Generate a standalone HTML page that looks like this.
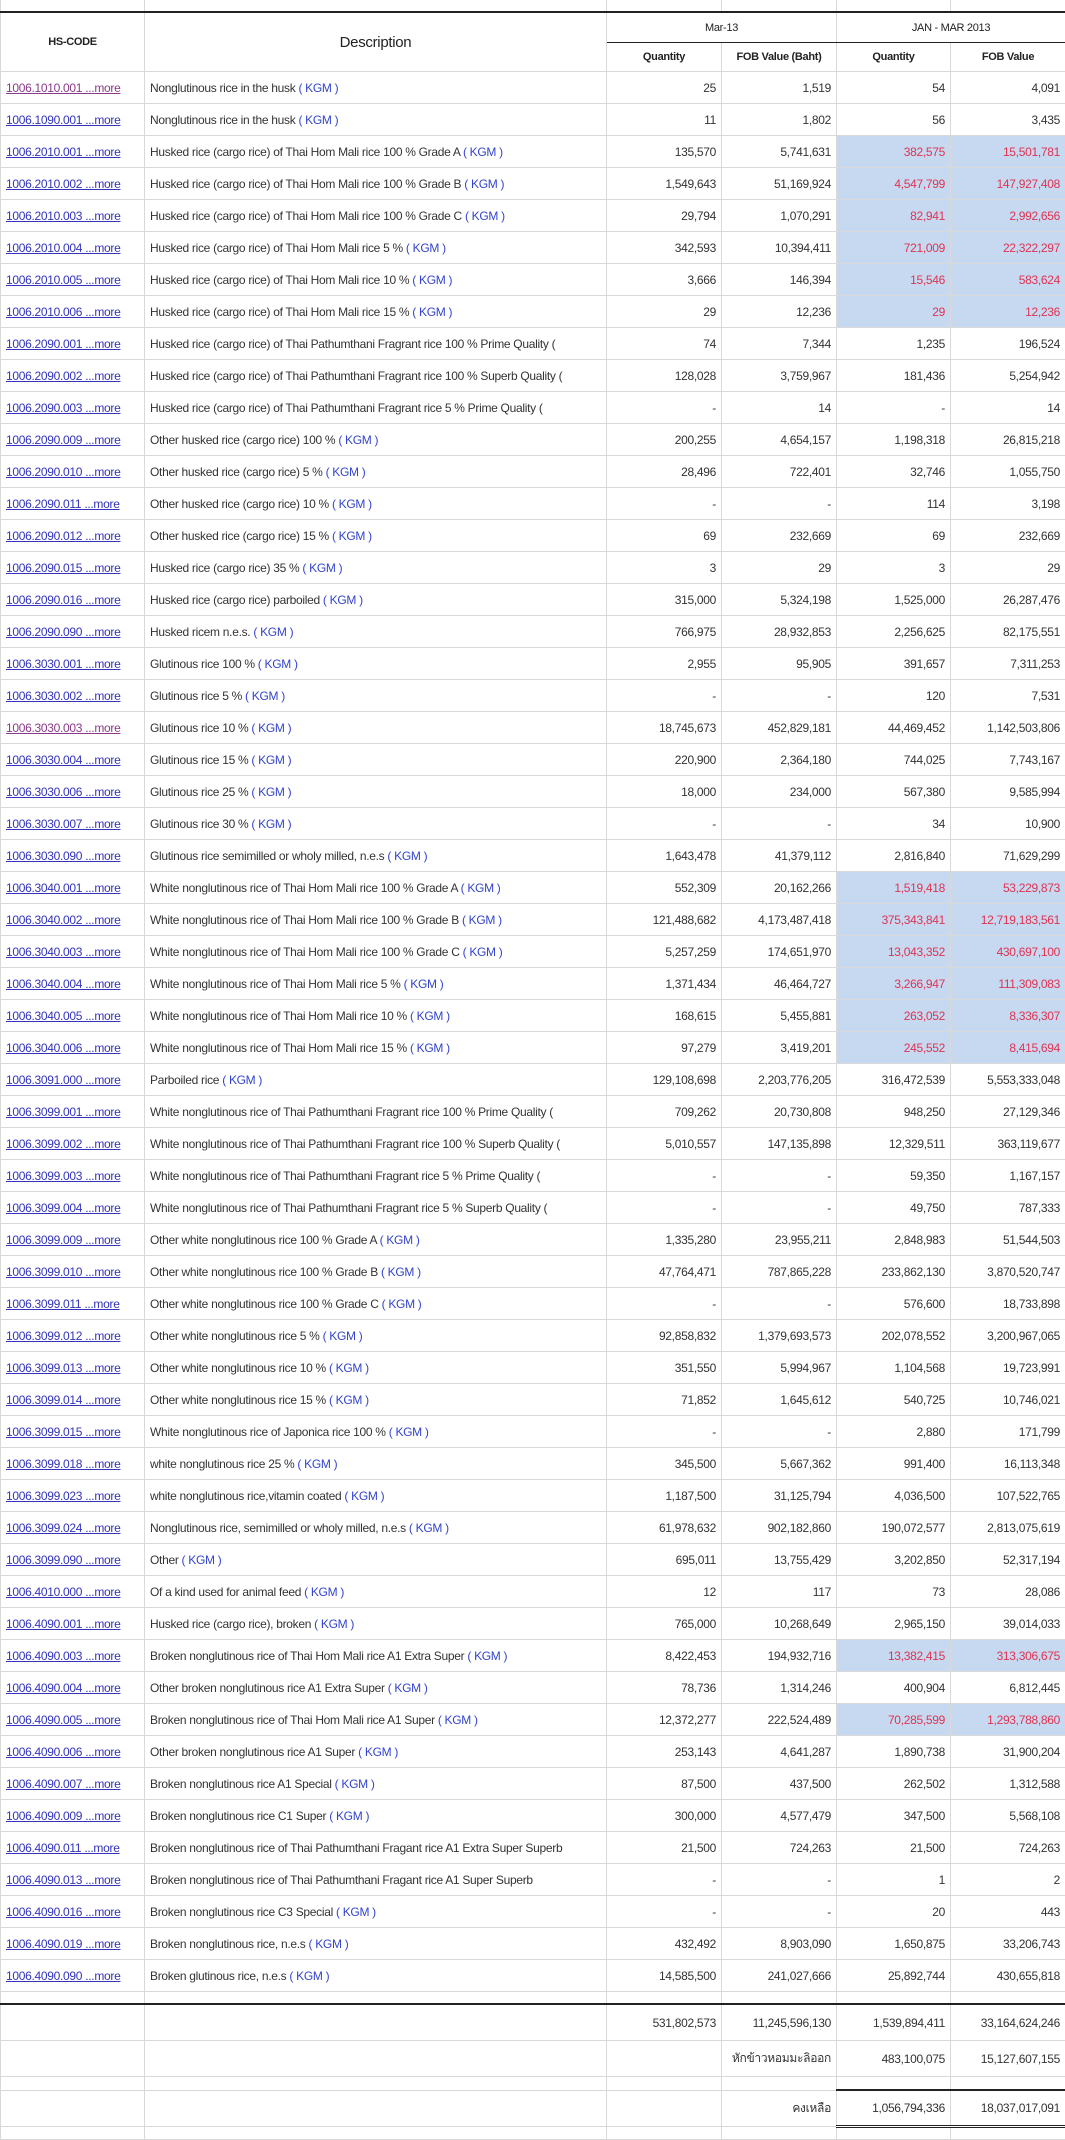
<!DOCTYPE html>
<html><head><meta charset="utf-8"><style>
body{margin:0;background:#fff;width:1065px;height:2130px;overflow:hidden;font-family:"Liberation Sans",Arial,sans-serif;font-size:12px;color:#333;letter-spacing:-0.3px}
table{border-collapse:collapse;table-layout:fixed;width:1065px}
td{border:1px solid #d9d9d9;padding:0 5px;white-space:nowrap;overflow:hidden;height:31px}
td.n{text-align:right}
td.h{background:#c6d9f0;color:#e03352;text-align:right}
a{color:#3333bb;text-decoration:underline}
a.v{color:#8a3a8a}
b{font-weight:normal;color:#3344cc}
tr.top td{height:11px;border-top:0}
tr.hd td{font-weight:bold;text-align:center;font-size:11px;color:#222}
tr.hd1 td{border-top:2px solid #222;height:29px}
tr.hd2 td{height:28px}
.desc{font-size:15px!important;font-weight:normal!important}
tr.sp td{height:11px}
tr.tk td{border-top:2px solid #222}
tr.ft td{height:35px}
tr.sp2 td{height:12px}
tr.last td{height:34px}
td.tk2{border-top:2px solid #222!important;border-bottom:3px double #222!important}
</style></head><body>
<table>
<colgroup><col style="width:144px"><col style="width:462px"><col style="width:115px"><col style="width:115px"><col style="width:114px"><col style="width:115px"></colgroup>
<tr class="top"><td></td><td></td><td></td><td></td><td></td><td></td></tr>
<tr class="hd hd1"><td rowspan="2">HS-CODE</td><td rowspan="2" class="desc">Description</td><td colspan="2" style="font-weight:normal;border-bottom:1px solid #222">Mar-13</td><td colspan="2" style="font-weight:normal;border-bottom:1px solid #222">JAN - MAR 2013</td></tr>
<tr class="hd hd2"><td>Quantity</td><td>FOB Value (Baht)</td><td>Quantity</td><td>FOB Value</td></tr>
<tr><td><a class="v">1006.1010.001 ...more</a></td><td>Nonglutinous rice in the husk <b>( KGM )</b></td><td class="n">25</td><td class="n">1,519</td><td class="n">54</td><td class="n">4,091</td></tr>
<tr><td><a>1006.1090.001 ...more</a></td><td>Nonglutinous rice in the husk <b>( KGM )</b></td><td class="n">11</td><td class="n">1,802</td><td class="n">56</td><td class="n">3,435</td></tr>
<tr><td><a>1006.2010.001 ...more</a></td><td>Husked rice (cargo rice) of Thai Hom Mali rice 100 % Grade A <b>( KGM )</b></td><td class="n">135,570</td><td class="n">5,741,631</td><td class="h">382,575</td><td class="h">15,501,781</td></tr>
<tr><td><a>1006.2010.002 ...more</a></td><td>Husked rice (cargo rice) of Thai Hom Mali rice 100 % Grade B <b>( KGM )</b></td><td class="n">1,549,643</td><td class="n">51,169,924</td><td class="h">4,547,799</td><td class="h">147,927,408</td></tr>
<tr><td><a>1006.2010.003 ...more</a></td><td>Husked rice (cargo rice) of Thai Hom Mali rice 100 % Grade C <b>( KGM )</b></td><td class="n">29,794</td><td class="n">1,070,291</td><td class="h">82,941</td><td class="h">2,992,656</td></tr>
<tr><td><a>1006.2010.004 ...more</a></td><td>Husked rice (cargo rice) of Thai Hom Mali rice 5 % <b>( KGM )</b></td><td class="n">342,593</td><td class="n">10,394,411</td><td class="h">721,009</td><td class="h">22,322,297</td></tr>
<tr><td><a>1006.2010.005 ...more</a></td><td>Husked rice (cargo rice) of Thai Hom Mali rice 10 % <b>( KGM )</b></td><td class="n">3,666</td><td class="n">146,394</td><td class="h">15,546</td><td class="h">583,624</td></tr>
<tr><td><a>1006.2010.006 ...more</a></td><td>Husked rice (cargo rice) of Thai Hom Mali rice 15 % <b>( KGM )</b></td><td class="n">29</td><td class="n">12,236</td><td class="h">29</td><td class="h">12,236</td></tr>
<tr><td><a>1006.2090.001 ...more</a></td><td>Husked rice (cargo rice) of Thai Pathumthani Fragrant rice 100 % Prime Quality (</td><td class="n">74</td><td class="n">7,344</td><td class="n">1,235</td><td class="n">196,524</td></tr>
<tr><td><a>1006.2090.002 ...more</a></td><td>Husked rice (cargo rice) of Thai Pathumthani Fragrant rice 100 % Superb Quality (</td><td class="n">128,028</td><td class="n">3,759,967</td><td class="n">181,436</td><td class="n">5,254,942</td></tr>
<tr><td><a>1006.2090.003 ...more</a></td><td>Husked rice (cargo rice) of Thai Pathumthani Fragrant rice 5 % Prime Quality (</td><td class="n">-</td><td class="n">14</td><td class="n">-</td><td class="n">14</td></tr>
<tr><td><a>1006.2090.009 ...more</a></td><td>Other husked rice (cargo rice) 100 % <b>( KGM )</b></td><td class="n">200,255</td><td class="n">4,654,157</td><td class="n">1,198,318</td><td class="n">26,815,218</td></tr>
<tr><td><a>1006.2090.010 ...more</a></td><td>Other husked rice (cargo rice) 5 % <b>( KGM )</b></td><td class="n">28,496</td><td class="n">722,401</td><td class="n">32,746</td><td class="n">1,055,750</td></tr>
<tr><td><a>1006.2090.011 ...more</a></td><td>Other husked rice (cargo rice) 10 % <b>( KGM )</b></td><td class="n">-</td><td class="n">-</td><td class="n">114</td><td class="n">3,198</td></tr>
<tr><td><a>1006.2090.012 ...more</a></td><td>Other husked rice (cargo rice) 15 % <b>( KGM )</b></td><td class="n">69</td><td class="n">232,669</td><td class="n">69</td><td class="n">232,669</td></tr>
<tr><td><a>1006.2090.015 ...more</a></td><td>Husked rice (cargo rice) 35 % <b>( KGM )</b></td><td class="n">3</td><td class="n">29</td><td class="n">3</td><td class="n">29</td></tr>
<tr><td><a>1006.2090.016 ...more</a></td><td>Husked rice (cargo rice) parboiled <b>( KGM )</b></td><td class="n">315,000</td><td class="n">5,324,198</td><td class="n">1,525,000</td><td class="n">26,287,476</td></tr>
<tr><td><a>1006.2090.090 ...more</a></td><td>Husked ricem n.e.s. <b>( KGM )</b></td><td class="n">766,975</td><td class="n">28,932,853</td><td class="n">2,256,625</td><td class="n">82,175,551</td></tr>
<tr><td><a>1006.3030.001 ...more</a></td><td>Glutinous rice 100 % <b>( KGM )</b></td><td class="n">2,955</td><td class="n">95,905</td><td class="n">391,657</td><td class="n">7,311,253</td></tr>
<tr><td><a>1006.3030.002 ...more</a></td><td>Glutinous rice 5 % <b>( KGM )</b></td><td class="n">-</td><td class="n">-</td><td class="n">120</td><td class="n">7,531</td></tr>
<tr><td><a class="v">1006.3030.003 ...more</a></td><td>Glutinous rice 10 % <b>( KGM )</b></td><td class="n">18,745,673</td><td class="n">452,829,181</td><td class="n">44,469,452</td><td class="n">1,142,503,806</td></tr>
<tr><td><a>1006.3030.004 ...more</a></td><td>Glutinous rice 15 % <b>( KGM )</b></td><td class="n">220,900</td><td class="n">2,364,180</td><td class="n">744,025</td><td class="n">7,743,167</td></tr>
<tr><td><a>1006.3030.006 ...more</a></td><td>Glutinous rice 25 % <b>( KGM )</b></td><td class="n">18,000</td><td class="n">234,000</td><td class="n">567,380</td><td class="n">9,585,994</td></tr>
<tr><td><a>1006.3030.007 ...more</a></td><td>Glutinous rice 30 % <b>( KGM )</b></td><td class="n">-</td><td class="n">-</td><td class="n">34</td><td class="n">10,900</td></tr>
<tr><td><a>1006.3030.090 ...more</a></td><td>Glutinous rice semimilled or wholy milled, n.e.s <b>( KGM )</b></td><td class="n">1,643,478</td><td class="n">41,379,112</td><td class="n">2,816,840</td><td class="n">71,629,299</td></tr>
<tr><td><a>1006.3040.001 ...more</a></td><td>White nonglutinous rice of Thai Hom Mali rice 100 % Grade A <b>( KGM )</b></td><td class="n">552,309</td><td class="n">20,162,266</td><td class="h">1,519,418</td><td class="h">53,229,873</td></tr>
<tr><td><a>1006.3040.002 ...more</a></td><td>White nonglutinous rice of Thai Hom Mali rice 100 % Grade B <b>( KGM )</b></td><td class="n">121,488,682</td><td class="n">4,173,487,418</td><td class="h">375,343,841</td><td class="h">12,719,183,561</td></tr>
<tr><td><a>1006.3040.003 ...more</a></td><td>White nonglutinous rice of Thai Hom Mali rice 100 % Grade C <b>( KGM )</b></td><td class="n">5,257,259</td><td class="n">174,651,970</td><td class="h">13,043,352</td><td class="h">430,697,100</td></tr>
<tr><td><a>1006.3040.004 ...more</a></td><td>White nonglutinous rice of Thai Hom Mali rice 5 % <b>( KGM )</b></td><td class="n">1,371,434</td><td class="n">46,464,727</td><td class="h">3,266,947</td><td class="h">111,309,083</td></tr>
<tr><td><a>1006.3040.005 ...more</a></td><td>White nonglutinous rice of Thai Hom Mali rice 10 % <b>( KGM )</b></td><td class="n">168,615</td><td class="n">5,455,881</td><td class="h">263,052</td><td class="h">8,336,307</td></tr>
<tr><td><a>1006.3040.006 ...more</a></td><td>White nonglutinous rice of Thai Hom Mali rice 15 % <b>( KGM )</b></td><td class="n">97,279</td><td class="n">3,419,201</td><td class="h">245,552</td><td class="h">8,415,694</td></tr>
<tr><td><a>1006.3091.000 ...more</a></td><td>Parboiled rice <b>( KGM )</b></td><td class="n">129,108,698</td><td class="n">2,203,776,205</td><td class="n">316,472,539</td><td class="n">5,553,333,048</td></tr>
<tr><td><a>1006.3099.001 ...more</a></td><td>White nonglutinous rice of Thai Pathumthani Fragrant rice 100 % Prime Quality (</td><td class="n">709,262</td><td class="n">20,730,808</td><td class="n">948,250</td><td class="n">27,129,346</td></tr>
<tr><td><a>1006.3099.002 ...more</a></td><td>White nonglutinous rice of Thai Pathumthani Fragrant rice 100 % Superb Quality (</td><td class="n">5,010,557</td><td class="n">147,135,898</td><td class="n">12,329,511</td><td class="n">363,119,677</td></tr>
<tr><td><a>1006.3099.003 ...more</a></td><td>White nonglutinous rice of Thai Pathumthani Fragrant rice 5 % Prime Quality (</td><td class="n">-</td><td class="n">-</td><td class="n">59,350</td><td class="n">1,167,157</td></tr>
<tr><td><a>1006.3099.004 ...more</a></td><td>White nonglutinous rice of Thai Pathumthani Fragrant rice 5 % Superb Quality (</td><td class="n">-</td><td class="n">-</td><td class="n">49,750</td><td class="n">787,333</td></tr>
<tr><td><a>1006.3099.009 ...more</a></td><td>Other white nonglutinous rice 100 % Grade A <b>( KGM )</b></td><td class="n">1,335,280</td><td class="n">23,955,211</td><td class="n">2,848,983</td><td class="n">51,544,503</td></tr>
<tr><td><a>1006.3099.010 ...more</a></td><td>Other white nonglutinous rice 100 % Grade B <b>( KGM )</b></td><td class="n">47,764,471</td><td class="n">787,865,228</td><td class="n">233,862,130</td><td class="n">3,870,520,747</td></tr>
<tr><td><a>1006.3099.011 ...more</a></td><td>Other white nonglutinous rice 100 % Grade C <b>( KGM )</b></td><td class="n">-</td><td class="n">-</td><td class="n">576,600</td><td class="n">18,733,898</td></tr>
<tr><td><a>1006.3099.012 ...more</a></td><td>Other white nonglutinous rice 5 % <b>( KGM )</b></td><td class="n">92,858,832</td><td class="n">1,379,693,573</td><td class="n">202,078,552</td><td class="n">3,200,967,065</td></tr>
<tr><td><a>1006.3099.013 ...more</a></td><td>Other white nonglutinous rice 10 % <b>( KGM )</b></td><td class="n">351,550</td><td class="n">5,994,967</td><td class="n">1,104,568</td><td class="n">19,723,991</td></tr>
<tr><td><a>1006.3099.014 ...more</a></td><td>Other white nonglutinous rice 15 % <b>( KGM )</b></td><td class="n">71,852</td><td class="n">1,645,612</td><td class="n">540,725</td><td class="n">10,746,021</td></tr>
<tr><td><a>1006.3099.015 ...more</a></td><td>White nonglutinous rice of Japonica rice 100 % <b>( KGM )</b></td><td class="n">-</td><td class="n">-</td><td class="n">2,880</td><td class="n">171,799</td></tr>
<tr><td><a>1006.3099.018 ...more</a></td><td>white nonglutinous rice 25 % <b>( KGM )</b></td><td class="n">345,500</td><td class="n">5,667,362</td><td class="n">991,400</td><td class="n">16,113,348</td></tr>
<tr><td><a>1006.3099.023 ...more</a></td><td>white nonglutinous rice,vitamin coated <b>( KGM )</b></td><td class="n">1,187,500</td><td class="n">31,125,794</td><td class="n">4,036,500</td><td class="n">107,522,765</td></tr>
<tr><td><a>1006.3099.024 ...more</a></td><td>Nonglutinous rice, semimilled or wholy milled, n.e.s <b>( KGM )</b></td><td class="n">61,978,632</td><td class="n">902,182,860</td><td class="n">190,072,577</td><td class="n">2,813,075,619</td></tr>
<tr><td><a>1006.3099.090 ...more</a></td><td>Other <b>( KGM )</b></td><td class="n">695,011</td><td class="n">13,755,429</td><td class="n">3,202,850</td><td class="n">52,317,194</td></tr>
<tr><td><a>1006.4010.000 ...more</a></td><td>Of a kind used for animal feed <b>( KGM )</b></td><td class="n">12</td><td class="n">117</td><td class="n">73</td><td class="n">28,086</td></tr>
<tr><td><a>1006.4090.001 ...more</a></td><td>Husked rice (cargo rice), broken <b>( KGM )</b></td><td class="n">765,000</td><td class="n">10,268,649</td><td class="n">2,965,150</td><td class="n">39,014,033</td></tr>
<tr><td><a>1006.4090.003 ...more</a></td><td>Broken nonglutinous rice of Thai Hom Mali rice A1 Extra Super <b>( KGM )</b></td><td class="n">8,422,453</td><td class="n">194,932,716</td><td class="h">13,382,415</td><td class="h">313,306,675</td></tr>
<tr><td><a>1006.4090.004 ...more</a></td><td>Other broken nonglutinous rice A1 Extra Super <b>( KGM )</b></td><td class="n">78,736</td><td class="n">1,314,246</td><td class="n">400,904</td><td class="n">6,812,445</td></tr>
<tr><td><a>1006.4090.005 ...more</a></td><td>Broken nonglutinous rice of Thai Hom Mali rice A1 Super <b>( KGM )</b></td><td class="n">12,372,277</td><td class="n">222,524,489</td><td class="h">70,285,599</td><td class="h">1,293,788,860</td></tr>
<tr><td><a>1006.4090.006 ...more</a></td><td>Other broken nonglutinous rice A1 Super <b>( KGM )</b></td><td class="n">253,143</td><td class="n">4,641,287</td><td class="n">1,890,738</td><td class="n">31,900,204</td></tr>
<tr><td><a>1006.4090.007 ...more</a></td><td>Broken nonglutinous rice A1 Special <b>( KGM )</b></td><td class="n">87,500</td><td class="n">437,500</td><td class="n">262,502</td><td class="n">1,312,588</td></tr>
<tr><td><a>1006.4090.009 ...more</a></td><td>Broken nonglutinous rice C1 Super <b>( KGM )</b></td><td class="n">300,000</td><td class="n">4,577,479</td><td class="n">347,500</td><td class="n">5,568,108</td></tr>
<tr><td><a>1006.4090.011 ...more</a></td><td>Broken nonglutinous rice of Thai Pathumthani Fragant rice A1 Extra Super Superb</td><td class="n">21,500</td><td class="n">724,263</td><td class="n">21,500</td><td class="n">724,263</td></tr>
<tr><td><a>1006.4090.013 ...more</a></td><td>Broken nonglutinous rice of Thai Pathumthani Fragant rice A1 Super Superb</td><td class="n">-</td><td class="n">-</td><td class="n">1</td><td class="n">2</td></tr>
<tr><td><a>1006.4090.016 ...more</a></td><td>Broken nonglutinous rice C3 Special <b>( KGM )</b></td><td class="n">-</td><td class="n">-</td><td class="n">20</td><td class="n">443</td></tr>
<tr><td><a>1006.4090.019 ...more</a></td><td>Broken nonglutinous rice, n.e.s <b>( KGM )</b></td><td class="n">432,492</td><td class="n">8,903,090</td><td class="n">1,650,875</td><td class="n">33,206,743</td></tr>
<tr><td><a>1006.4090.090 ...more</a></td><td>Broken glutinous rice, n.e.s <b>( KGM )</b></td><td class="n">14,585,500</td><td class="n">241,027,666</td><td class="n">25,892,744</td><td class="n">430,655,818</td></tr>
<tr class="sp"><td></td><td></td><td></td><td></td><td></td><td></td></tr>
<tr class="ft tk"><td></td><td></td><td class="n">531,802,573</td><td class="n">11,245,596,130</td><td class="n">1,539,894,411</td><td class="n">33,164,624,246</td></tr>
<tr class="ft"><td></td><td></td><td></td><td class="n" style="font-family:'Liberation Sans','Noto Sans CJK SC',sans-serif">หักข้าวหอมมะลิออก</td><td class="n">483,100,075</td><td class="n">15,127,607,155</td></tr>
<tr class="sp2"><td></td><td></td><td></td><td></td><td></td><td></td></tr>
<tr class="last"><td></td><td></td><td></td><td class="n" style="font-family:'Liberation Sans','Noto Sans CJK SC',sans-serif">คงเหลือ</td><td class="n tk2">1,056,794,336</td><td class="n tk2">18,037,017,091</td></tr>
<tr class="top"><td></td><td></td><td></td><td></td><td></td><td></td></tr>
</table>
</body></html>
